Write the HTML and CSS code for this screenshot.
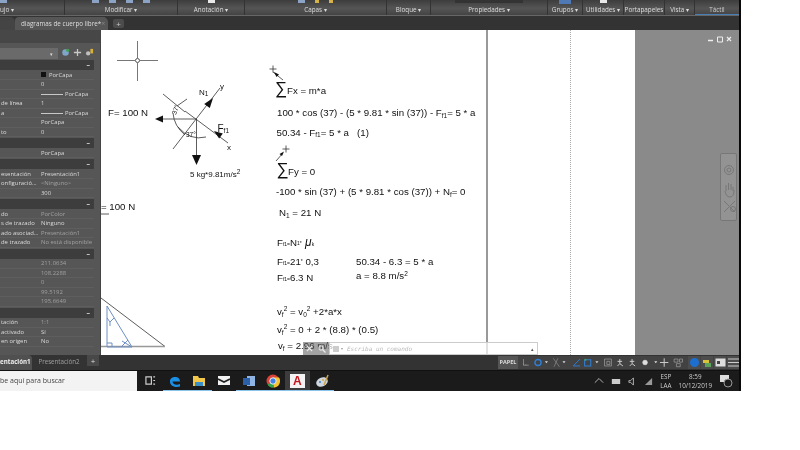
FILE: index.html
```html
<!DOCTYPE html>
<html lang="es">
<head>
<meta charset="utf-8">
<title>diagramas de cuerpo libre</title>
<link rel="stylesheet" href="styles.css">
</head>
<body>
<div class="app">
  <div class="ribbon">
    <div class="panel left"><div class="chips"><i></i></div><span>ujo ▾</span></div>
    <div class="panel"><div class="chips"><i></i><i></i><i></i><i></i></div><span>Modificar ▾</span></div>
    <div class="panel"><div class="chips"><i class="light"></i></div><span>Anotación ▾</span></div>
    <div class="panel"><div class="chips"><i></i><i class="gold"></i><i class="gold"></i></div><span>Capas ▾</span></div>
    <div class="panel"><div class="chips"></div><span>Bloque ▾</span></div>
    <div class="panel"><div class="chips"><b class="field"></b></div><span>Propiedades ▾</span></div>
    <div class="panel"><div class="chips"><i class="blue"></i></div><span>Grupos ▾</span></div>
    <div class="panel"><div class="chips"><i class="light"></i></div><span>Utilidades ▾</span></div>
    <div class="panel"><div class="chips"></div><span>Portapapeles</span></div>
    <div class="panel"><div class="chips"></div><span>Vista ▾</span></div>
    <div class="panel touch"><div class="chips"></div><span>Táctil</span></div>
  </div>

  <div class="tabs">
    <div class="tab-prev"></div>
    <div class="tab-active"><span>diagramas de cuerpo libre*</span><span class="close">×</span></div>
    <div class="tab-add">+</div>
  </div>

  <div class="main">
    <aside class="palette">
      <div class="pal-title"></div>
      <div class="combo-row">
        <div class="combo"><span>▾</span></div>
        <svg class="pal-icon" viewBox="0 0 10 10"><circle cx="5" cy="5" r="3.6" fill="#7fa6c8"/><circle cx="7.5" cy="2.5" r="1.8" fill="#3fa14a"/></svg>
        <svg class="pal-icon" viewBox="0 0 10 10"><path d="M5 1v8M1 5h8" stroke="#c8c8c8" stroke-width="1.4"/></svg>
        <svg class="pal-icon" viewBox="0 0 10 10"><circle cx="3.5" cy="6" r="2.4" fill="#bfbfbf"/><rect x="6" y="1" width="3" height="5" fill="#d9b23a"/></svg>
      </div>

      <div class="head">–</div>
      <div class="row"><span></span><span><em class="swatch"></em>PorCapa</span></div>
      <div class="row"><span></span><span>0</span></div>
      <div class="row"><span></span><span class="linev"><em class="dash"></em>PorCapa</span></div>
      <div class="row"><span class="label">de línea</span><span>1</span></div>
      <div class="row"><span class="label">a</span><span class="linev"><em class="dash"></em>PorCapa</span></div>
      <div class="row"><span></span><span>PorCapa</span></div>
      <div class="row"><span class="label">to</span><span>0</span></div>

      <div class="head">–</div>
      <div class="row"><span></span><span>PorCapa</span></div>

      <div class="head">–</div>
      <div class="row"><span class="label">esentación</span><span>Presentación1</span></div>
      <div class="row"><span class="label">onfiguració...</span><span class="dim">&lt;Ninguno&gt;</span></div>
      <div class="row"><span></span><span>300</span></div>

      <div class="head">–</div>
      <div class="row"><span class="label">do</span><span class="dim">PorColor</span></div>
      <div class="row"><span class="label">s de trazado</span><span>Ninguno</span></div>
      <div class="row"><span class="label">ado asociad...</span><span class="dim">Presentación1</span></div>
      <div class="row"><span class="label">de trazado</span><span class="dim">No está disponible</span></div>

      <div class="head">–</div>
      <div class="row"><span></span><span class="dim">211.0634</span></div>
      <div class="row"><span></span><span class="dim">108.2288</span></div>
      <div class="row"><span></span><span class="dim">0</span></div>
      <div class="row"><span></span><span class="dim">99.5192</span></div>
      <div class="row"><span></span><span class="dim">195.6649</span></div>

      <div class="head">–</div>
      <div class="row"><span class="label">tación</span><span class="dim">1:1</span></div>
      <div class="row"><span class="label">activado</span><span>Sí</span></div>
      <div class="row"><span class="label">en origen</span><span>No</span></div>
    </aside>

    <div class="viewport">
      <div class="sheet">
        <svg class="drawing" viewBox="101 30 534 325" width="534" height="325">
          <g class="gray">
            <path d="M117 60.5h18M140 60.5h18M137.5 41v17M137.5 63v18"/>
            <circle cx="137.5" cy="60.5" r="2"/>
          </g>
          <g class="ink">
            <path d="M160 119H196.5V160"/>
            <path d="M173 149L220 88"/>
            <path d="M185 111L228 143"/>
            <path d="M163 94L185 112"/>
            <path d="M177 106L187 99"/>
            <path d="M173 113Q174 126 185 135"/>
            <path d="M178 127Q190 141 206 137"/>
            <path d="M273 65.5v7M269.5 69h7"/>
            <path d="M273 72L283 80"/>
            <path d="M286 145.500v7M282.500 149h7"/>
            <path d="M276 161L283 153"/>
            <path d="M101 214h8"/>
            <path d="M101 298L165 346.500"/>
          </g>
          <path class="fill" d="M155 119L163 115.500V122.500Z"/>
          <path class="fill" d="M192 155H201L196.500 165Z"/>
          <path class="fill" d="M213 98L209.800 108.100L204.200 103.900Z"/>
          <path class="fill" d="M214 131L222.800 133.600L219.200 138.400Z"/>
          <path class="fill" d="M274 72L279 74.500L276.500 77Z"/>
          <path class="fill" d="M284 151.500L282 156L279.500 154Z"/>
          <path class="base" d="M101 346.500H165"/>
          <path class="blue-line" d="M107 306V347H132L107 306M107 343h5v4M121 347L128 340M122 341L132 347M107 318l3 4l4-4M110 322v4"/>

          <g class="note sm">
            <text x="199" y="95">N<tspan class="sub" dy="1">1</tspan></text>
            <text x="220" y="89">y</text>
            <text x="227" y="150">x</text>
            <text x="217.500" y="132" class="mid">F<tspan class="sub" dy="1">f1</tspan></text>
            <text x="190" y="177">5 kg*9.81m/s<tspan class="sub" dy="-3">2</tspan></text>
            <text x="186" y="137" class="tiny">37°</text>
            <text class="tiny" transform="translate(176 115) rotate(-70)">37°</text>
          </g>
          <g class="note">
            <text x="108" y="116">F= 100 N</text>
            <text x="101" y="210">= 100 N</text>
            <text x="275" y="94" class="sigma">∑</text>
            <text x="287" y="93.500">Fx = m*a</text>
            <text x="277" y="116">100 * cos (37) - (5 * 9.81 * sin (37)) - F<tspan class="sub" dy="1.500">f1</tspan><tspan dy="-1.500">= 5 * a</tspan></text>
            <text x="276.500" y="135.500">50.34 - F<tspan class="sub" dy="1.500">f1</tspan><tspan dy="-1.500">= 5 * a   (1)</tspan></text>
            <text x="276.500" y="175" class="sigma">∑</text>
            <text x="288" y="175">Fy = 0</text>
            <text x="276" y="195">-100 * sin (37) + (5 * 9.81 * cos (37)) + N<tspan class="sub" dy="1.500">f</tspan><tspan dy="-1.500">= 0</tspan></text>
            <text x="279" y="216">N<tspan class="sub" dy="1.500">1</tspan><tspan dy="-1.500"> = 21 N</tspan></text>
            <text x="277" y="246">F<tspan class="mini">f1=</tspan>N<tspan class="mini" dy="-1">1*</tspan><tspan dy="1" class="mu"> μ</tspan><tspan class="mini">k</tspan></text>
            <text x="277" y="265">F<tspan class="mini">f1=</tspan>21<tspan class="mini" dy="-2">*</tspan><tspan dy="2"> 0,3</tspan></text>
            <text x="277" y="281">F<tspan class="mini">f1=</tspan>6.3 N</text>
            <text x="356" y="265">50.34 - 6.3 = 5 * a</text>
            <text x="356" y="279">a = 8.8 m/s<tspan class="sub" dy="-3.500">2</tspan></text>
            <text x="277" y="315">v<tspan class="sub" dy="2">f</tspan><tspan class="sub" dy="-6">2</tspan><tspan dy="4"> = v</tspan><tspan class="sub" dy="2">0</tspan><tspan class="sub" dy="-6">2</tspan><tspan dy="4"> +2*a*x</tspan></text>
            <text x="277" y="333">v<tspan class="sub" dy="2">f</tspan><tspan class="sub" dy="-6">2</tspan><tspan dy="4"> = 0 + 2 * (8.8) * (0.5)</tspan></text>
            <text x="278" y="349">v<tspan class="sub" dy="2">f</tspan><tspan dy="-2"> = 2.96 m/s</tspan></text>
          </g>
        </svg>
        <div class="margin-solid"></div>
        <div class="margin-dotted"></div>
      </div>
      <div class="outside">
        <div class="winctl">
          <svg viewBox="0 0 26 8" width="26" height="8"><path d="M1 5.500h5" stroke="#eee" stroke-width="1.500"/><path d="M10.500 2h5v5h-5z" fill="none" stroke="#eee"/><path d="M20 2l4 4M24 2l-4 4" stroke="#eee" stroke-width="1.200"/></svg>
        </div>
        <div class="navbar">
          <svg viewBox="0 0 16 66" width="16" height="66" fill="none" stroke="#777" stroke-width="1">
            <circle cx="7" cy="15" r="4.500"/><circle cx="7" cy="15" r="2"/>
            <path d="M4 36v-6M6.500 35v-7M9 35v-6M11 36v-4M3 36q1 6 5 6q4 0 4-7"/>
            <path d="M2 46l11 11M13 46l-11 11"/><circle cx="11" cy="54" r="2.500"/>
          </svg>
        </div>
      </div>
      <div class="command">
        <div class="cmd-btns">
          <svg viewBox="0 0 8 8" width="7" height="7"><path d="M1 1l6 6M7 1l-6 6" stroke="#eee" stroke-width="1.300"/></svg>
          <svg viewBox="0 0 8 8" width="8" height="8"><circle cx="3" cy="3" r="2.200" fill="none" stroke="#eee"/><path d="M4.500 4.500L7.500 7.500" stroke="#eee" stroke-width="1.300"/></svg>
        </div>
        <div class="cmd-input">
          <svg class="cmd-arrow" viewBox="0 0 10 6" width="10" height="6"><path d="M0 0h6v6H0z" fill="#ccc"/><path d="M8 2h2l-1 2z" fill="#999"/></svg>
          <span class="prompt">Escriba un comando</span>
          <span class="caret">▴</span>
        </div>
      </div>
    </div>
  </div>

  <div class="layouts">
    <div class="ltab on">entación1</div>
    <div class="ltab">Presentación2</div>
    <div class="ltab add">+</div>
    <div class="status">
      <div class="papel">PAPEL</div>
      <svg viewBox="0 -2 218 17" width="168" height="13">
        <path d="M5 2v8h7M5 10v-2M8 10v-1" stroke="#999" fill="none"/>
        <circle cx="24" cy="6.500" r="4" fill="none" stroke="#2d7fd8" stroke-width="1.800"/>
        <path d="M33 5h4l-2 2.500z" fill="#ddd"/>
        <path d="M44 1l8 11M50 1l-5 11" stroke="#888" fill="none"/>
        <path d="M56 5h4l-2 2.500z" fill="#ddd"/>
        <path d="M70 11l9-9M70 11h9" stroke="#2d7fd8" stroke-width="1.200" fill="none"/>
        <path d="M85 3h8v8h-8z" fill="none" stroke="#2d7fd8" stroke-width="1.400"/><circle cx="86" cy="3" r="1.500" fill="#3fa14a"/>
        <path d="M99 5h4l-2 2.500z" fill="#ddd"/>
        <path d="M111 2h9v9h-9zM114 5h4v4h-4z" fill="none" stroke="#999"/>
        <path d="M131 2v6l-3 3M131 8l4 3M128 5h6" stroke="#ccc" stroke-width="1.300" fill="none"/>
        <path d="M147 2v6l-3 3M147 8l4 3M144 5h6" stroke="#ccc" stroke-width="1.300" fill="none"/>
        <circle cx="164" cy="6.500" r="3" fill="#ddd" stroke="#ddd"/>
        <path d="M176 5h4l-2 2.500z" fill="#ddd"/>
        <path d="M189 1v11M183.500 6.500h11" stroke="#ccc" stroke-width="1.300"/>
        <path d="M202 2h5v4h-5zM209 2h4v4h-4zM205 8h5v4h-5z" fill="none" stroke="#999"/>
      </svg>
      <div class="st-btn on"><em></em></div>
      <div class="st-btn"><svg viewBox="0 0 10 10" width="10" height="10"><path d="M1 2h6v3H1z" fill="#d9c23a"/><path d="M3 5h6v4H3z" fill="#5ba35b"/></svg></div>
      <div class="st-btn"><svg viewBox="0 0 11 9" width="11" height="9"><path d="M.5.500h10v8H.5z" fill="#ddd"/><path d="M2 3h3v3H2z" fill="#444"/></svg></div>
      <div class="st-btn"><svg viewBox="0 0 11 9" width="11" height="9"><path d="M0 1h11M0 4.500h11M0 8h11" stroke="#ccc" stroke-width="1.200"/></svg></div>
    </div>
  </div>

  <div class="taskbar">
    <div class="search">be aquí para buscar</div>
    <div class="apps">
      <div class="app-btn"><svg viewBox="0 0 12 12" width="11" height="11"><path d="M1 2h6v8H1zM9 2h2M9 6h2M9 10h2" fill="none" stroke="#ccc" stroke-width="1.300"/></svg></div>
      <div class="app-btn run"><svg viewBox="0 0 14 14" width="14" height="14"><path d="M2 7C2 2 12 1 12 7.500H4.500C5 11 9 11.500 12 10V12.500C7 14 1.500 12 2 7Z" fill="#1b8fe3"/></svg></div>
      <div class="app-btn run"><svg viewBox="0 0 14 12" width="14" height="12"><path d="M1 1h5l1 2h6v8H1z" fill="#f2c84b"/><path d="M3 7h8v4H3z" fill="#3a8fc7"/></svg></div>
      <div class="app-btn"><svg viewBox="0 0 14 11" width="14" height="11"><path d="M1 1h12v9H1z" fill="#f2f2f2"/><path d="M1 4l6 3l6-3" fill="none" stroke="#222" stroke-width="1.600"/></svg></div>
      <div class="app-btn run"><svg viewBox="0 0 13 12" width="13" height="12"><path d="M5 1h8v10H5z" fill="#8fb4e3"/><path d="M1 3h7v7H1z" fill="#2b5fa8"/></svg></div>
      <div class="app-btn run"><svg viewBox="0 0 14 14" width="14" height="14"><circle cx="7" cy="7" r="6.500" fill="#dc4437"/><path d="M7 7L1.500 10.500A6.500 6.500 0 0 0 8 13.500Z" fill="#30a24b"/><path d="M7 3.500H13A6.500 6.500 0 0 1 8 13.500Z" fill="#f7c42f"/><circle cx="7" cy="7" r="3.200" fill="#3f83e8" stroke="#eee"/></svg></div>
      <div class="app-btn active"><span class="acad">A</span></div>
      <div class="app-btn run"><svg viewBox="0 0 14 14" width="14" height="14"><ellipse cx="7" cy="8" rx="6" ry="4.500" fill="#cfd6df" transform="rotate(-25 7 8)"/><circle cx="5" cy="8" r="1" fill="#3a7fc7"/><circle cx="8" cy="6" r="1" fill="#d9b23a"/><path d="M9 11L13 1" stroke="#c9a24b" stroke-width="1.500"/></svg></div>
    </div>
    <div class="tray">
      <svg viewBox="0 0 12 12" width="10" height="10"><path d="M1 8l5-5l5 5" stroke="#ccc" fill="none"/></svg>
      <svg viewBox="0 0 12 10" width="10" height="9"><path d="M1 2h10v6H1z" fill="#ccc"/></svg>
      <svg viewBox="0 0 10 10" width="9" height="9"><path d="M1 4h2l3-3v8L3 6H1z" fill="none" stroke="#bbb"/></svg>
      <svg viewBox="0 0 10 10" width="9" height="9"><path d="M1 9L9 1V9z" fill="#999"/></svg>
      <div class="lang"><span>ESP</span><span>LAA</span></div>
      <div class="clock"><span>8:59</span><span>10/12/2019</span></div>
      <svg viewBox="0 0 14 14" width="14" height="14"><path d="M1 1h9v7H1z" fill="#ddd"/><circle cx="9" cy="9" r="4" fill="#1c1c1c" stroke="#999"/></svg>
    </div>
  </div>
</div>
</body>
</html>
```
FILE: styles.css
```css
* { box-sizing: border-box; }
html, body { margin: 0; padding: 0; background: #fff; }
body { width: 800px; height: 450px; overflow: hidden; font-family: "Open Sans", "Liberation Sans", sans-serif; }

.app {
  width: 741px; height: 391px; display: flex; flex-direction: column;
  background: #1b1b1b; border-right: 2px solid #0a0a0a; overflow: hidden;
  filter: blur(0.4px);
}

/* Ribbon */
.ribbon {
  height: 16px; display: grid;
  grid-template-columns: 65px 113px 67px 142px 44px 117px 35px 41px 41px 30px 44px;
  background: linear-gradient(#3d3d3d, #555 55%, #444);
  border-bottom: 1px solid #666;
}
.panel { display: flex; flex-direction: column; align-items: center; border-right: 1px solid #333; color: #dcdcdc; font-size: 6.300px; line-height: 8px; white-space: nowrap; }
.panel.left { align-items: flex-start; }
.panel.touch { border-right: 0; border-bottom: 1px solid #4a7fb5; color: #ccc; }
.chips { height: 6px; display: flex; gap: 10px; align-items: flex-start; }
.chips i { display: block; width: 7px; height: 3px; background: #8ba3c4; }
.chips i.light { background: #e8e8e8; }
.chips i.gold { width: 4px; background: #d6b24a; }
.chips i.blue { width: 12px; height: 4px; background: #4f79b5; }
.chips .field { display: block; width: 68px; height: 3px; background: #333; }

/* Document tabs */
.tabs { height: 14px; display: flex; align-items: flex-end; gap: 3px; background: #333; }
.tab-prev { width: 15px; height: 13px; background: #444; border-radius: 0 5px 0 0; margin-right: -3px; }
.tab-active {
  width: 93px; height: 13px; padding: 0 5px 0 6px; display: flex; align-items: center; justify-content: space-between;
  background: #565656; color: #dedede; font-size: 6.300px; border-radius: 4px 5px 0 0; white-space: nowrap;
}
.close { color: #888; font-size: 7px; }
.tab-add { width: 11px; height: 9px; margin: 0 0 2px 2px; background: #4c4c4c; color: #ccc; font-size: 8px; line-height: 9px; text-align: center; border-radius: 2px; }

/* Main */
.main { height: 325px; display: flex; }
.palette { width: 101px; flex: none; background: #565656; border-right: 1px solid #444; color: #d8d8d8; font-size: 5.900px; overflow: hidden; }
.pal-title { height: 13px; background: #474747; }
.combo-row { height: 17px; padding: 5px 3px 1px 0; display: flex; align-items: flex-start; gap: 3px; }
.combo { width: 58px; height: 11px; background: #6a6a6a; border-right: 5px solid #6a6a6a; display: flex; justify-content: flex-end; align-items: center; color: #ddd; font-size: 5px; }
.pal-icon { width: 9px; height: 9px; }
.head { width: 94px; height: 10px; margin: 1px 0 .5px; background: #3d3d3d; color: #ddd; font-size: 7px; line-height: 10px; text-align: right; padding-right: 4px; font-weight: 700; }
.combo-row + .head { margin-top: 0; }
.row { width: 94px; height: 9.500px; line-height: 9.500px; display: grid; grid-template-columns: 41px 53px; border-bottom: 1px solid #5e5e5e; white-space: nowrap; overflow: hidden; }
.label { color: #dcdcdc; padding-left: 1px; overflow: hidden; }
.dim { color: #a0a0a0; }
.swatch { display: inline-block; width: 5px; height: 5px; background: #111; margin-right: 3px; }
.linev { display: flex; align-items: center; gap: 2px; }
.dash { display: block; width: 22px; height: 1px; background: #c8c8c8; }

/* Viewport */
.viewport { position: relative; flex: 1; display: flex; min-width: 0; }
.sheet { position: relative; width: 534px; background: #fff; overflow: hidden; }
.drawing { display: block; }
.gray path { stroke: #777; stroke-width: 1; fill: none; }
.gray circle { fill: #fff; stroke: #555; stroke-width: 1; }
.ink path { stroke: #333; stroke-width: .8; fill: none; }
.fill { fill: #111; }
.base { stroke: #999; stroke-width: 1.500; fill: none; }
.blue-line { stroke: #6f8fc4; stroke-width: 1; fill: none; }
.note text { font-family: "Liberation Sans", Arial, sans-serif; font-size: 9.700px; fill: #111; white-space: pre; }
.note.sm text { font-size: 8px; }
.note.sm .mid { font-size: 10px; }
.note.sm .tiny, .note .tiny { font-size: 6.500px; }
.note .sub { font-size: 6.500px; }
.note .mini { font-size: 5px; }
.note .sigma { font-size: 17px; }
.note .mu { font-size: 12px; font-style: italic; }
.margin-solid { position: absolute; left: 385px; top: 0; width: 2px; height: 100%; background: #999; }
.margin-dotted { position: absolute; left: 469px; top: 0; width: 1px; height: 100%; border-left: 1px dotted #aaa; }
.outside { flex: 1; display: flex; flex-direction: column; align-items: flex-end; background: #8a8a8a; padding: 5px 6px 0 0; gap: 110px; }
.winctl { height: 8px; line-height: 0; }
.navbar { width: 17px; height: 68px; margin-right: -4px; padding: 1px 0 0 1px; background: #939393; border: 1px solid #777; border-radius: 2px; }

.command { position: absolute; left: 202px; bottom: 0; width: 235px; height: 13px; display: flex; }
.cmd-btns { width: 26px; display: flex; align-items: center; justify-content: space-around; background: rgba(90,90,90,.55); }
.cmd-input { flex: 1; display: flex; align-items: center; padding: 0 3px; background: rgba(255,255,255,.7); border: 1px solid #ccc; }
.cmd-arrow { margin-right: 4px; }
.prompt { color: #bbb; font: italic 6px "DejaVu Sans Mono", monospace; white-space: nowrap; }
.caret { margin-left: auto; color: #555; font-size: 5px; }

/* Layout tabs + status bar */
.layouts { height: 15px; display: flex; align-items: stretch; background: #333; color: #ccc; font-size: 6.200px; }
.ltab { margin-left: 4px; width: 46px; line-height: 13px; color: #a0a0a0; text-align: center; white-space: nowrap; }
.ltab.on { margin-left: 0; width: 32px; background: #505050; color: #eee; font-weight: 700; border-radius: 0 4px 0 0; text-align: left; }
.ltab.add { width: 12px; margin-left: 5px; color: #ddd; font-size: 8px; background: #484848; height: 11px; line-height: 11px; }
.status { margin-left: auto; margin-top: 1px; height: 13px; display: flex; align-items: center; background: #424242; }
.papel { width: 20px; height: 13px; line-height: 13px; background: #555; color: #ddd; font-size: 5.500px; font-weight: 700; text-align: center; margin-right: 1px; }
.st-btn { width: 12px; height: 13px; display: flex; align-items: center; justify-content: center; background: #4c4c4c; margin-left: 1px; }
.st-btn em { display: block; width: 9px; height: 9px; border-radius: 50%; background: #1c6fd0; }

/* Windows taskbar */
.taskbar { height: 21px; display: flex; align-items: stretch; background: #1b1b1b; border-top: 1px solid #111; color: #ddd; }
.search { width: 137px; background: #f3f3f3; color: #444; font-size: 7px; line-height: 20px; white-space: nowrap; }
.apps { display: flex; margin-left: 1px; }
.app-btn { width: 24.500px; display: flex; align-items: center; justify-content: center; border-bottom: 1px solid transparent; }
.app-btn.run { border-bottom-color: #8ac4ea; }
.app-btn.active { background: #3c3c3c; border-bottom-color: #8ac4ea; }
.acad { width: 15px; height: 14px; display: block; background: #f3f3f3; color: #c3161c; font: 700 12px/14px "Liberation Sans", sans-serif; text-align: center; }
.tray { margin-left: auto; display: flex; align-items: center; gap: 7px; padding-right: 6px; font-size: 6.300px; }
.lang, .clock { display: flex; flex-direction: column; align-items: center; line-height: 9px; color: #ccc; white-space: nowrap; }
```
